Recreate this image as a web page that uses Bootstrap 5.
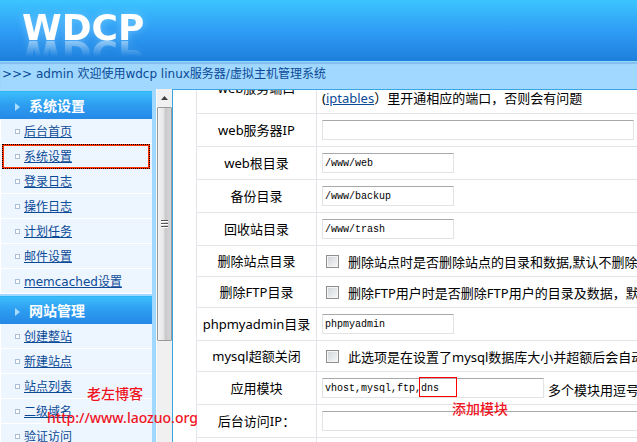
<!DOCTYPE html>
<html lang="zh-CN">
<head>
<meta charset="utf-8">
<meta name="viewport" content="width=device-width, initial-scale=1">
<title>WDCP</title>
<link href="https://cdn.jsdelivr.net/npm/bootstrap@5.3.0/dist/css/bootstrap.min.css" rel="stylesheet">
<style>
body{font:12px/18px "DejaVu Sans","Noto Sans CJK SC",sans-serif;color:#000;background:#fff}
a{color:#0b4a96}
.top-banner{height:61px;background:linear-gradient(#3cc5ff,#2f9df5 50%,#1d7fdc);padding:10px 22px}
.brand-text{font:bold 36px/36px "DejaVu Sans",sans-serif;color:#fff;width:max-content;text-shadow:0 0 8px #8fd4ff99;-webkit-box-reflect:below -11px linear-gradient(transparent 40%,#ffffff80 85%)}
.welcome-bar{height:28px;background:#a0d8ff;border-top:1px solid #8fdcff;box-shadow:inset 0 2px 1px #84bdf0;color:#0b4a96;padding:3px 2px}
.side{width:156px;background:#a0d8ff;padding:2px 4px 0 0}
.side-head{font-size:14px;font-weight:bold;line-height:27px;height:28px;color:#fff;background:linear-gradient(#3bbdfb,#2d9cf0 50%,#2589e6);border-top:1px solid #2fb4f4;padding:2px 0 0 15px;gap:9px;margin:0}
.side-head::before{content:"";border:solid transparent;border-width:4px 0 4px 5px;border-left-color:#a8dcff}
.side-list{margin:0 0 2px;background:#edf5ff}
.side-list li{height:25px;padding:1px 0 0 14px;gap:4px;border-bottom:1px solid #fff;border-left:1px solid #fff}
.side-list li::before{content:"";width:5px;height:5px;border:1px solid #a9bfda;background:#fff}
.side-list li.picked{margin:0 2px;padding:0 0 0 11px;border:2px solid #ff3200;outline:1px dotted #000;outline-offset:-1px}
.scroll-track{width:16px;background:#f0f0f0;border-left:1px solid #fafafa}
.scroll-up{height:18px;border:0;padding:0;background:none}
.scroll-thumb{height:234px;width:15px;border:1px solid #999;border-radius:1px;background:linear-gradient(90deg,#f5f5f5,#e4e4e4 45%,#c9c9cc 55%,#d6d6d8)}
.main-pane{border-left:1px solid #38a6e4;border-top:1px solid #38a6e4;padding-left:23px}
.form-grid{font:13px/20px "Noto Sans","Noto Sans CJK SC",sans-serif;width:760px;margin-top:-29px}
.form-grid th,.form-grid td{border:1px solid #e2e4e9;font-weight:normal;height:33px;padding:0 5px;white-space:nowrap}
.form-grid th{width:120px;text-align:center}
.form-grid .tick-row th,.form-grid .tick-row td{height:31px}
.form-grid .first-row th,.form-grid .first-row td{height:52px}
.form-grid .first-row td{vertical-align:bottom;padding-bottom:5px}
.text-field{font:10px/16px "Liberation Mono",monospace;color:#000;height:20px;width:132px;padding:0 2px;border:1px solid #e2e3e6;border-top-color:#a6a8ac;background:#fff;display:block}
.w-ip{width:312px}.w-mod{width:222px}.w-login{width:420px}
.tick-box{appearance:none;width:13px;height:13px;margin:0 9px 0 4px;border:1px solid #8e8f8f;background:linear-gradient(135deg,#cfd3d8,#f8f8f8);box-shadow:inset 0 0 0 1px #f4f4f4}
.tick-row label{padding-top:2px}
.red-note{color:#f0141e;font:14px/20px "Noto Sans","Noto Sans CJK SC",sans-serif;font-weight:500;white-space:nowrap}
.mark-box{left:97px;top:1px;width:38px;height:20px;border:1px solid #f00}
.mark-note{left:130px;top:23px}
.site-note{left:47px;top:384px}
.site-name{padding-left:40px}
</style>
<script src="https://cdn.jsdelivr.net/npm/bootstrap@5.3.0/dist/js/bootstrap.bundle.min.js"></script>
</head>
<body class="d-flex flex-column vh-100 overflow-hidden position-relative">
<header class="flex-shrink-0">
  <div class="top-banner"><h1 class="brand-text m-0">WDCP</h1></div>
  <div class="welcome-bar">&gt;&gt;&gt; admin 欢迎使用wdcp linux服务器/虚拟主机管理系统</div>
</header>
<div class="d-flex flex-grow-1 overflow-hidden">
  <nav class="side flex-shrink-0 overflow-hidden">
    <h2 class="side-head d-flex align-items-center">系统设置</h2>
    <ul class="side-list list-unstyled">
      <li class="d-flex align-items-center"><a href="#">后台首页</a></li>
      <li class="d-flex align-items-center picked"><a href="#">系统设置</a></li>
      <li class="d-flex align-items-center"><a href="#">登录日志</a></li>
      <li class="d-flex align-items-center"><a href="#">操作日志</a></li>
      <li class="d-flex align-items-center"><a href="#">计划任务</a></li>
      <li class="d-flex align-items-center"><a href="#">邮件设置</a></li>
      <li class="d-flex align-items-center"><a href="#">memcached设置</a></li>
    </ul>
    <h2 class="side-head d-flex align-items-center">网站管理</h2>
    <ul class="side-list list-unstyled">
      <li class="d-flex align-items-center"><a href="#">创建整站</a></li>
      <li class="d-flex align-items-center"><a href="#">新建站点</a></li>
      <li class="d-flex align-items-center"><a href="#">站点列表</a></li>
      <li class="d-flex align-items-center"><a href="#">二级域名</a></li>
      <li class="d-flex align-items-center"><a href="#">验证访问</a></li>
    </ul>
  </nav>
  <div class="scroll-track d-flex flex-column flex-shrink-0">
    <button class="scroll-up d-flex align-items-center justify-content-center" type="button" aria-label="向上滚动"><svg width="7" height="4" viewBox="0 0 7 4"><path d="M0 4 3.500 0 7 4z" fill="#404040"/></svg></button>
    <div class="scroll-thumb d-flex align-items-center justify-content-center"><svg width="7" height="8" viewBox="0 0 7 8"><path d="M0 .5h7M0 3.500h7M0 6.500h7" stroke="#555"/><path d="M0 1.500h7M0 4.500h7M0 7.500h7" stroke="#fff"/></svg></div>
  </div>
  <main class="main-pane flex-grow-1 overflow-hidden">
    <table class="form-grid">
      <tbody>
        <tr class="first-row"><th scope="row">web服务端口</th><td>(<a href="#">iptables</a>）里开通相应的端口，否则会有问题</td></tr>
        <tr><th scope="row"><label for="ip">web服务器IP</label></th><td><input class="text-field w-ip" id="ip" type="text"></td></tr>
        <tr><th scope="row"><label for="root">web根目录</label></th><td><input class="text-field" id="root" type="text" value="/www/web"></td></tr>
        <tr><th scope="row"><label for="bak">备份目录</label></th><td><input class="text-field" id="bak" type="text" value="/www/backup"></td></tr>
        <tr><th scope="row"><label for="trash">回收站目录</label></th><td><input class="text-field" id="trash" type="text" value="/www/trash"></td></tr>
        <tr class="tick-row"><th scope="row">删除站点目录</th><td><div class="d-flex align-items-center"><input class="tick-box" id="t1" type="checkbox"><label for="t1">删除站点时是否删除站点的目录和数据,默认不删除</label></div></td></tr>
        <tr class="tick-row"><th scope="row">删除FTP目录</th><td><div class="d-flex align-items-center"><input class="tick-box" id="t2" type="checkbox"><label for="t2">删除FTP用户时是否删除FTP用户的目录及数据，默认不删除</label></div></td></tr>
        <tr><th scope="row"><label for="pma">phpmyadmin目录</label></th><td><input class="text-field" id="pma" type="text" value="phpmyadmin"></td></tr>
        <tr class="tick-row"><th scope="row">mysql超额关闭</th><td><div class="d-flex align-items-center"><input class="tick-box" id="t3" type="checkbox"><label for="t3">此选项是在设置了mysql数据库大小并超额后会自动关闭</label></div></td></tr>
        <tr><th scope="row"><label for="mod">应用模块</label></th><td><div class="d-flex align-items-center gap-1 position-relative"><input class="text-field w-mod" id="mod" type="text" value="vhost,mysql,ftp,dns"><span class="pt-1">多个模块用逗号分隔</span><span class="mark-box position-absolute"></span><span class="mark-note red-note position-absolute">添加模块</span></div></td></tr>
        <tr><th scope="row"><label for="login">后台访问IP：</label></th><td><input class="text-field w-login" id="login" type="text"></td></tr>
        <tr><th></th><td></td></tr>
      </tbody>
    </table>
  </main>
</div>
<div class="site-note red-note position-absolute"><div class="site-name">老左博客</div><div class="pt-1">http://www.laozuo.org</div></div>
</body>
</html>
